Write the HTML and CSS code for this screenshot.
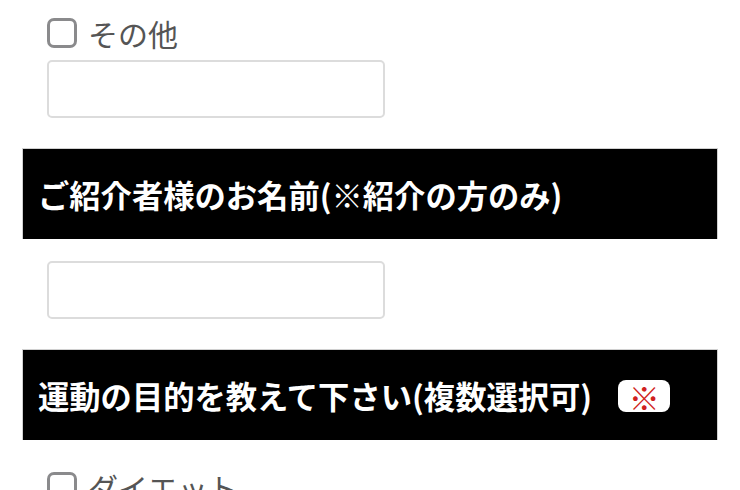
FILE: index.html
```html
<!DOCTYPE html>
<html lang="ja">
<head>
<meta charset="utf-8">
<link rel="stylesheet" href="styles.css">
</head>
<body>
<div class="form">
  <div class="field">
    <label class="check-row"><span class="checkbox"></span><span class="check-label">その他</span></label>
    <div class="text-input"></div>
  </div>
  <div class="section-title"><span>ご紹介者様のお名前(※紹介の方のみ)</span></div>
  <div class="field field-single">
    <div class="text-input"></div>
  </div>
  <div class="section-title"><span>運動の目的を教えて下さい(複数選択可)</span><span class="badge">※</span></div>
  <div class="field field-checks">
    <label class="check-row"><span class="checkbox"></span><span class="check-label">ダイエット</span></label>
  </div>
</div>
</body>
</html>
```
FILE: styles.css
```css
html, body {
  margin: 0;
  padding: 0;
  background: #fff;
}
body {
  font-family: "Noto Sans CJK JP", "Noto Sans", sans-serif;
  width: 740px;
  height: 490px;
  overflow: hidden;
}
.form {
  margin: 0 22px;
  padding-top: 18px;
  display: flex;
  flex-direction: column;
}
.field {
  padding: 0 333px 0 25px;
  display: flex;
  flex-direction: column;
}
.field-single {
  margin-top: 22px;
}
.field-single .text-input {
  margin-top: 0;
}
.field-checks {
  margin-top: 32px;
}
.check-row {
  display: flex;
  align-items: center;
  height: 30px;
  gap: 11px;
}
.checkbox {
  box-sizing: border-box;
  width: 30px;
  height: 30px;
  border: 3px solid #8a8a8c;
  border-radius: 7px;
  background: #fff;
  flex: none;
}
.check-label {
  font-size: 30px;
  line-height: 30px;
  color: #555;
  white-space: nowrap;
}
.text-input {
  box-sizing: border-box;
  margin-top: 12px;
  width: 338px;
  height: 58px;
  border: 2px solid #dcdcdc;
  border-radius: 5px;
  background: #fff;
}
.section-title {
  box-sizing: border-box;
  margin-top: 30px;
  height: 91px;
  background: #000;
  border: 1px solid #d0d0d0;
  border-bottom: none;
  display: flex;
  align-items: center;
  padding: 2px 0 0 15px;
  color: #fff;
  font-weight: 700;
  font-size: 31.3px;
  line-height: 1;
  white-space: nowrap;
}
.badge {
  margin-left: 26px;
  width: 52px;
  height: 32px;
  border-radius: 8px;
  background: #fff;
  color: #d02020;
  font-weight: 400;
  font-size: 31px;
  display: flex;
  align-items: center;
  justify-content: center;
}
```
